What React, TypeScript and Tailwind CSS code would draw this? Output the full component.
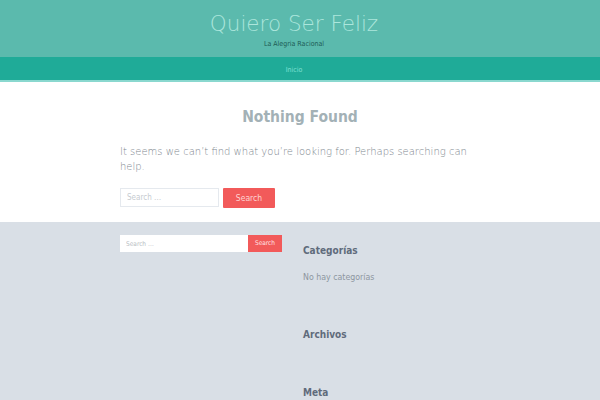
export default function App() {
  const font = "font-['DejaVu_Sans_Condensed','DejaVu_Sans',sans-serif]";
  const light = "font-['DejaVu_Sans',sans-serif] font-extralight";
  return (
    <div className={`min-h-[400px] w-full bg-[#d9dfe6] ${font}`}>
      <header className="flex h-[57px] flex-col items-center bg-[#5bbaad] pr-[12px] pt-[11px]">
        <h1 className={`text-[21.5px] leading-[26px] text-[#ace6dc] ${light}`}>Quiero Ser Feliz</h1>
        <p className="mt-[3px] text-[7px] leading-[8px] text-[#1d5c55]">La Alegria Racional</p>
      </header>
      <nav className="flex h-[25px] items-center justify-center border-b-2 border-[#8ad8cf] bg-[#1fab98] pr-[12px] pt-[4px]">
        <span className="text-[7px] text-[#7fe0d3]">Inicio</span>
      </nav>
      <main className="bg-white pb-[14px] pt-[25px]">
        <div className="mx-auto w-[360px]">
          <h2 className="text-center text-[15.5px] font-bold leading-[20px] text-[#a3b1b6]">
            Nothing Found
          </h2>
          <p className={`mt-[17px] text-[10px] leading-[15px] text-[#80888f] ${light}`}>
            It seems we can’t find what you’re looking for. Perhaps searching can help.
          </p>
          <form className="mt-[14px] flex gap-[4px]">
            <input
              placeholder="Search …"
              className="h-[19px] w-[99px] border border-[#e5e9ee] bg-white px-[6px] text-[8px] placeholder:text-[#c6cbd0]"
            />
            <button
              type="button"
              className="h-[20px] w-[52px] rounded-[1px] bg-[#f25a5a] text-[8.5px] text-[#ffd3d3]"
            >
              Search
            </button>
          </form>
        </div>
      </main>
      <section className="mx-auto flex w-[360px] gap-[21px] pt-[13px]">
        <div className="flex h-[17px] w-[162px] shrink-0">
          <input
            placeholder="Search …"
            className="h-[17px] w-[128px] bg-white px-[6px] text-[6.5px] placeholder:text-[#b9bec4]"
          />
          <button type="button" className="h-[17px] w-[34px] bg-[#f25a5a] text-[6.5px] text-[#ffe0e0]">
            Search
          </button>
        </div>
        <aside className="flex flex-col pt-[9px]">
          <h3 className="text-[10px] font-bold leading-[14px] text-[#5f6b7b]">Categorías</h3>
          <p className="mt-[13px] text-[8.75px] leading-[12px] text-[#8d96a0]">No hay categorías</p>
          <h3 className="mt-[45px] text-[10px] font-bold leading-[14px] text-[#5f6b7b]">Archivos</h3>
          <h3 className="mt-[44px] text-[10px] font-bold leading-[14px] text-[#5f6b7b]">Meta</h3>
        </aside>
      </section>
    </div>
  );
}
